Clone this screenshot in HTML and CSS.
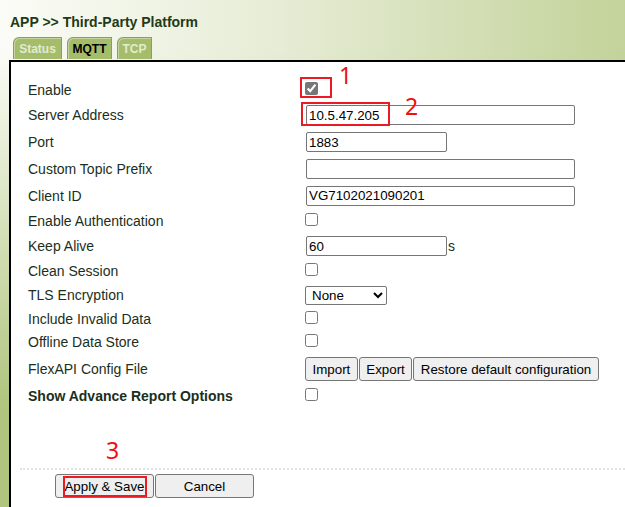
FILE: index.html
```html
<!DOCTYPE html>
<html>
<head>
<meta charset="utf-8">
<link rel="stylesheet" href="styles.css">
</head>
<body>
<div class="page">
  <h1 class="title">APP &gt;&gt; Third-Party Platform</h1>
  <div class="tabs">
    <span class="tab w-status">Status</span>
    <span class="tab tab-active w-mqtt">MQTT</span>
    <span class="tab w-tcp">TCP</span>
  </div>
  <div class="panel">
    <div class="form">
      <div class="row h24"><span class="label">Enable</span><span class="ctrl"><input type="checkbox" class="cb" checked></span></div>
      <div class="row h26"><span class="label">Server Address</span><span class="ctrl"><input type="text" class="txt long" value="10.5.47.205"></span></div>
      <div class="row h28"><span class="label">Port</span><span class="ctrl"><input type="text" class="txt short" value="1883"></span></div>
      <div class="row h26"><span class="label">Custom Topic Prefix</span><span class="ctrl"><input type="text" class="txt long" value=""></span></div>
      <div class="row h27"><span class="label">Client ID</span><span class="ctrl"><input type="text" class="txt long" value="VG7102021090201"></span></div>
      <div class="row h24"><span class="label">Enable Authentication</span><span class="ctrl"><input type="checkbox" class="cb"></span></div>
      <div class="row h26"><span class="label">Keep Alive</span><span class="ctrl"><input type="text" class="txt short" value="60"><span class="unit">s</span></span></div>
      <div class="row h24"><span class="label">Clean Session</span><span class="ctrl"><input type="checkbox" class="cb"></span></div>
      <div class="row h24"><span class="label">TLS Encryption</span><span class="ctrl"><select class="sel"><option>None</option></select></span></div>
      <div class="row h24"><span class="label">Include Invalid Data</span><span class="ctrl"><input type="checkbox" class="cb"></span></div>
      <div class="row h22"><span class="label">Offline Data Store</span><span class="ctrl"><input type="checkbox" class="cb"></span></div>
      <div class="row h32"><span class="label">FlexAPI Config File</span><span class="ctrl btn-group"><button class="btn">Import</button><button class="btn">Export</button><button class="btn">Restore default configuration</button></span></div>
      <div class="row h22"><span class="label strong">Show Advance Report Options</span><span class="ctrl"><input type="checkbox" class="cb"></span></div>
    </div>
    <div class="sep"></div>
    <div class="actions">
      <button class="btn wide">Apply &amp; Save</button>
      <button class="btn wide">Cancel</button>
    </div>
  </div>

  <span class="mark mark-1">1</span>
  <span class="mark mark-2">2</span>
  <span class="mark mark-3">3</span>
  <span class="box box-1"></span>
  <span class="box box-2"></span>
  <span class="box box-3"></span>
</div>
</body>
</html>
```

FILE: styles.css
```css
html, body {
  margin: 0;
  padding: 0;
  height: 507px;
  overflow: hidden;
}

body {
  font-family: "Liberation Sans", Arial, sans-serif;
  background:
    linear-gradient(to bottom, rgba(176, 197, 126, 0) 10%, rgba(176, 197, 126, 1) 80%),
    linear-gradient(to right, #fbfcf7 0%, #e6ecd5 45%, #c3d39a 100%);
}

.page {
  position: relative;
  width: 625px;
  height: 507px;
  overflow: hidden;
}

.title {
  margin: 0;
  padding: 14px 0 0 10px;
  font-size: 14px;
  line-height: 16px;
  font-weight: bold;
  color: #1f3a18;
}

.tabs {
  display: flex;
  gap: 5px;
  margin: 7px 0 0 13px;
  height: 23px;
}

.tab {
  box-sizing: border-box;
  height: 22px;
  display: flex;
  align-items: center;
  justify-content: center;
  font-size: 12px;
  font-weight: bold;
  color: #e3ebd0;
  background: #a5bc6b;
  border: 1px solid #8c9a74;
  border-bottom: none;
  border-top-left-radius: 6px;
  box-shadow: inset 1px 1px 0 #c4d49a;
}

.tab-active {
  color: #000;
}

.w-status { width: 49px; }
.w-mqtt { width: 45px; }
.w-tcp { width: 35px; }

.panel {
  box-sizing: border-box;
  margin-left: 9px;
  width: 616px;
  height: 447px;
  background: #fff;
  border-top: 2px solid #000;
  border-left: 2px solid #000;
  padding-top: 16px;
}

.form {
  display: flex;
  flex-direction: column;
  padding-left: 17px;
}

.row {
  display: flex;
  align-items: center;
}

.h22 { height: 22px; }
.h24 { height: 24px; }
.h26 { height: 26px; }
.h27 { height: 27px; }
.h28 { height: 28px; }
.h32 { height: 32px; }

.label {
  width: 277px;
  flex: none;
  font-size: 14px;
  line-height: 16px;
  color: #1b2f20;
}

.label.strong {
  font-weight: bold;
}

.ctrl {
  display: flex;
  align-items: center;
}

.cb {
  width: 13px;
  height: 13px;
  margin: 0 0 3px 0;
  accent-color: #777;
}

.txt {
  box-sizing: border-box;
  height: 20px;
  margin: 0 0 0 1px;
  padding: 0 2px;
  border: 1px solid #767676;
  border-radius: 2px;
  font-family: "Liberation Sans", Arial, sans-serif;
  font-size: 13.33px;
  color: #000;
  background: #fff;
}

.long { width: 269px; }
.short { width: 141px; }

.unit {
  font-size: 14px;
  color: #1b2f20;
  margin-left: 1px;
}

.sel {
  box-sizing: border-box;
  width: 82px;
  height: 19px;
  margin: 0;
  padding: 0 0 0 2px;
  border: 1px solid #767676;
  border-radius: 2px;
  font-family: "Liberation Sans", Arial, sans-serif;
  font-size: 13.33px;
  color: #000;
  background: #fff;
}

.btn-group {
  gap: 1px;
}

.btn {
  box-sizing: border-box;
  height: 24px;
  margin: 0;
  padding: 0 6.5px;
  border: 1px solid #767676;
  border-radius: 3px;
  background: #efefef;
  font-family: "Liberation Sans", Arial, sans-serif;
  font-size: 13.33px;
  color: #000;
}

.sep {
  margin: 61px 0 0 9px;
  border-top: 2px dotted #e2e2e2;
}

.actions {
  display: flex;
  gap: 1px;
  margin: 4px 0 0 44px;
}

.btn.wide {
  width: 99px;
  padding: 0;
}

.mark {
  position: absolute;
  font-family: "Noto Sans", "DejaVu Sans", sans-serif;
  font-size: 23px;
  line-height: 23px;
  color: #f01010;
}

.mark-1 { left: 339px; top: 64px; }
.mark-2 { left: 405px; top: 95px; }
.mark-3 { left: 106px; top: 439px; }

.box {
  position: absolute;
  box-sizing: border-box;
  border: 2px solid #ec1a22;
}

.box-1 { left: 300px; top: 77px; width: 32px; height: 21px; }
.box-2 { left: 301px; top: 102px; width: 89px; height: 24px; }
.box-3 { left: 63px; top: 476px; width: 84px; height: 21px; }
```
